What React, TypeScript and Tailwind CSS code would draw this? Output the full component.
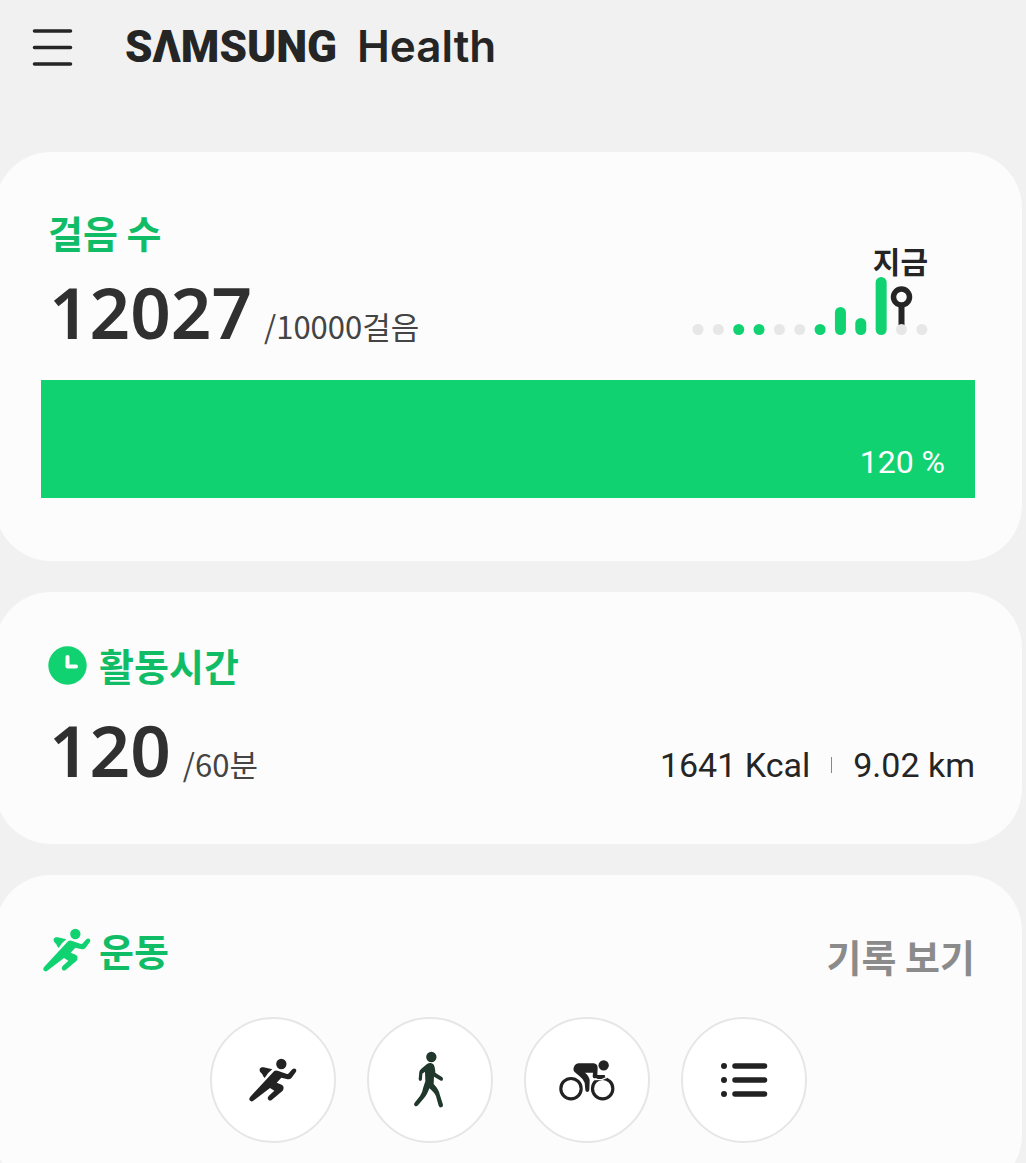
import type { ReactNode } from "react";

const HOURS = [11, 11, 11, 11, 11, 11, 11, 28, 17, 58, 11, 11];
const ACTIVE = [2, 3, 6, 7, 8, 9];

function StepChart() {
  return (
    <div className="mr-[47px] flex flex-col items-end">
      <span className="font-['Noto_Sans_CJK_KR',sans-serif] text-[30px] leading-8 font-bold text-[#252525]">지금</span>
      <svg width="236" height="59" viewBox="0 -1 236 59" role="img" aria-label="시간별 걸음 수">
        <path d="M209.500 28V57" stroke="#252525" strokeWidth="6" />
        <circle cx="209.500" cy="20" r="8" fill="none" stroke="#252525" strokeWidth="5.500" />
        {HOURS.map((h, i) => (
          <rect key={i} x={0.5 + i * 20.35} y={58 - h} width="11" height={h} rx="5.5" fill={ACTIVE.includes(i) ? "#11d270" : "#e7e7e7"} />
        ))}
      </svg>
    </div>
  );
}

function RunIcon() {
  return (
    <svg width="48" height="44" viewBox="146 157 144 132" fill="currentColor" aria-hidden="true">
      <circle cx="243" cy="175" r="15.500" />
      <path d="M190 185L216 191Q202 201 193 217Q188 212 186 206L179 198Q175 188 184 185Q187 184 190 185Z" />
      <path d="M221 197Q226 193 234 196L260 205Q263 206 266 202L276 191Q281 187 286 190Q290 194 286 200L274 216Q268 223 259 220L243 216L229 231L244 237Q254 243 247 255L215 282Q209 287 204 282Q200 278 205 271L222 255L209 247L159 285Q153 290 148 284Q145 279 150 273Z" />
    </svg>
  );
}

function WalkIcon() {
  return (
    <svg width="32" height="58" viewBox="642 138 96 174" fill="currentColor" className="overflow-visible" aria-hidden="true">
      <circle cx="694" cy="156" r="15.500" />
      <path d="M681 177Q691 171 700 178Q705 184 706 203L727 217Q731 221 728 226Q725 229 720 226L702 215L701 237Q717 254 719 268L729 299Q730 305 724 307Q718 308 716 302L708 274Q704 263 688 250Q681 270 673 278L654 301Q649 306 644 302Q640 298 644 293L660 273Q667 264 670 247L676 229L675 200L667 206L666 223Q665 228 660 228Q656 227 656 222L658 200Q659 195 664 191Z" />
    </svg>
  );
}

function BikeIcon() {
  return (
    <svg width="56" height="42" viewBox="146 160 168 126" fill="currentColor" aria-hidden="true">
      <circle cx="182" cy="249" r="30.500" fill="none" stroke="currentColor" strokeWidth="9.500" />
      <circle cx="277" cy="249" r="30.500" fill="none" stroke="currentColor" strokeWidth="9.500" />
      <path d="M252 222L276 221L290 215" fill="none" stroke="#fff" strokeWidth="4" />
      <circle cx="280" cy="179" r="15.500" />
      <path d="M206 173H250Q261 174 262 186L261 208L282 208Q286 210 284 214L280 216L252 218Q247 218 247 212L248 201H224Q237 211 238 225L237 253Q236 259 230 259Q225 258 225 252L223 231Q219 220 207 211L193 199Q187 193 191 183Q195 174 206 173Z" />
    </svg>
  );
}

function ListIcon() {
  return (
    <svg width="48" height="36" viewBox="0 0 48 36" stroke="currentColor" strokeLinecap="round" aria-hidden="true">
      {[4, 18, 32].map((y) => (
        <g key={y}>
          <circle cx="4" cy={y} r="3" fill="currentColor" stroke="none" />
          <path d={`M15 ${y}H44.500`} strokeWidth="5.500" />
        </g>
      ))}
    </svg>
  );
}

function Card({ children, className }: { children: ReactNode; className: string }) {
  return <section className={`-ml-[5px] mr-1 rounded-[56px] bg-[#fcfcfc] pr-[47px] pl-[46px] ${className}`}>{children}</section>;
}

function Amount({ value, goal }: { value: string; goal: string }) {
  return (
    <p className="ml-2 flex items-baseline gap-3">
      <span className="font-['Noto_Sans',sans-serif] text-[71px] leading-[84px] font-semibold text-[#303030]">{value}</span>
      <span className="font-['Noto_Sans_CJK_KR',sans-serif] text-[31px] text-[#444]">{goal}</span>
    </p>
  );
}

function Title({ children }: { children: ReactNode }) {
  return <h2 className="text-[38px] leading-[48px] font-bold text-[#10bd66]">{children}</h2>;
}

function RoundButton({ label, children }: { label: string; children: ReactNode }) {
  return (
    <button type="button" aria-label={label} className="flex size-[126px] items-center justify-center rounded-full border-2 border-[#e6e6e6] bg-white text-[#222]">
      {children}
    </button>
  );
}

export default function App() {
  return (
    <main className="h-screen overflow-x-hidden overflow-y-auto bg-[#f1f1f1] font-['Noto_Sans_CJK_KR',sans-serif]">
      <header className="flex h-[152px] items-start gap-[52px] pt-[18px] pl-8">
        <button type="button" aria-label="메뉴" className="mt-[10px] text-[#252525]">
          <svg width="41" height="40" viewBox="0 0 41 40" stroke="currentColor" strokeWidth="3.600" strokeLinecap="round" aria-hidden="true">
            <path d="M2.500 3H38.500M2.500 19.500H38.500M2.500 36H38.500" />
          </svg>
        </button>
        <h1 className="flex items-baseline gap-5 leading-[56px] text-[#252525]">
          <span aria-label="SAMSUNG" className="font-[Roboto,sans-serif] text-[44px] font-black">SΛMSUNG</span>
          <span className="font-[Inter,sans-serif] text-[44px] font-semibold">Health</span>
        </h1>
      </header>

      <div className="flex flex-col gap-[31px]">
        <Card className="pt-14 pb-[63px]">
          <div className="flex items-end justify-between">
            <div>
              <div className="mb-[14px] ml-[7px]"><Title>걸음 수</Title></div>
              <Amount value="12027" goal="/10000걸음" />
            </div>
            <div className="mb-[19px]"><StepChart /></div>
          </div>
          <div className="mt-[26px] flex h-[118px] items-end justify-end bg-[#11d270] px-[30px] pb-4 font-[Roboto,sans-serif] text-[32px] leading-10 text-white">
            120 %
          </div>
        </Card>

        <Card className="pt-[49px] pb-[52px]">
          <div className="ml-[7px] flex items-center gap-3">
            <svg width="39" height="39" viewBox="0 0 39 39" aria-hidden="true">
              <circle cx="19.500" cy="19.500" r="19.200" fill="#11d270" />
              <path d="M19.500 11V20.500H28" fill="none" stroke="#fcfcfc" strokeWidth="4" strokeLinecap="round" strokeLinejoin="round" />
            </svg>
            <Title>활동시간</Title>
          </div>
          <div className="mt-[19px] flex items-baseline justify-between">
            <Amount value="120" goal="/60분" />
            <p className="flex items-center font-[Roboto,sans-serif] text-[34px] leading-10 text-[#252525]">
              <span>1641 Kcal</span>
              <span className="mx-[21px] h-4 w-px bg-[#888]" />
              <span>9.02 km</span>
            </p>
          </div>
        </Card>

        <Card className="pt-[45px] pb-12">
          <div className="flex items-center justify-between">
            <div className="ml-[2px] flex items-center gap-2 text-[#11d270]">
              <RunIcon />
              <Title>운동</Title>
            </div>
            <a href="#records" className="mt-3 text-[38px] leading-[48px] font-bold text-[#8b8b8b]">기록 보기</a>
          </div>
          <div className="mt-[37px] flex justify-center gap-[31px]">
            <RoundButton label="달리기"><RunIcon /></RoundButton>
            <RoundButton label="걷기"><span className="text-[#20382c]"><WalkIcon /></span></RoundButton>
            <RoundButton label="자전거"><BikeIcon /></RoundButton>
            <RoundButton label="운동 목록"><ListIcon /></RoundButton>
          </div>
        </Card>
      </div>
    </main>
  );
}
